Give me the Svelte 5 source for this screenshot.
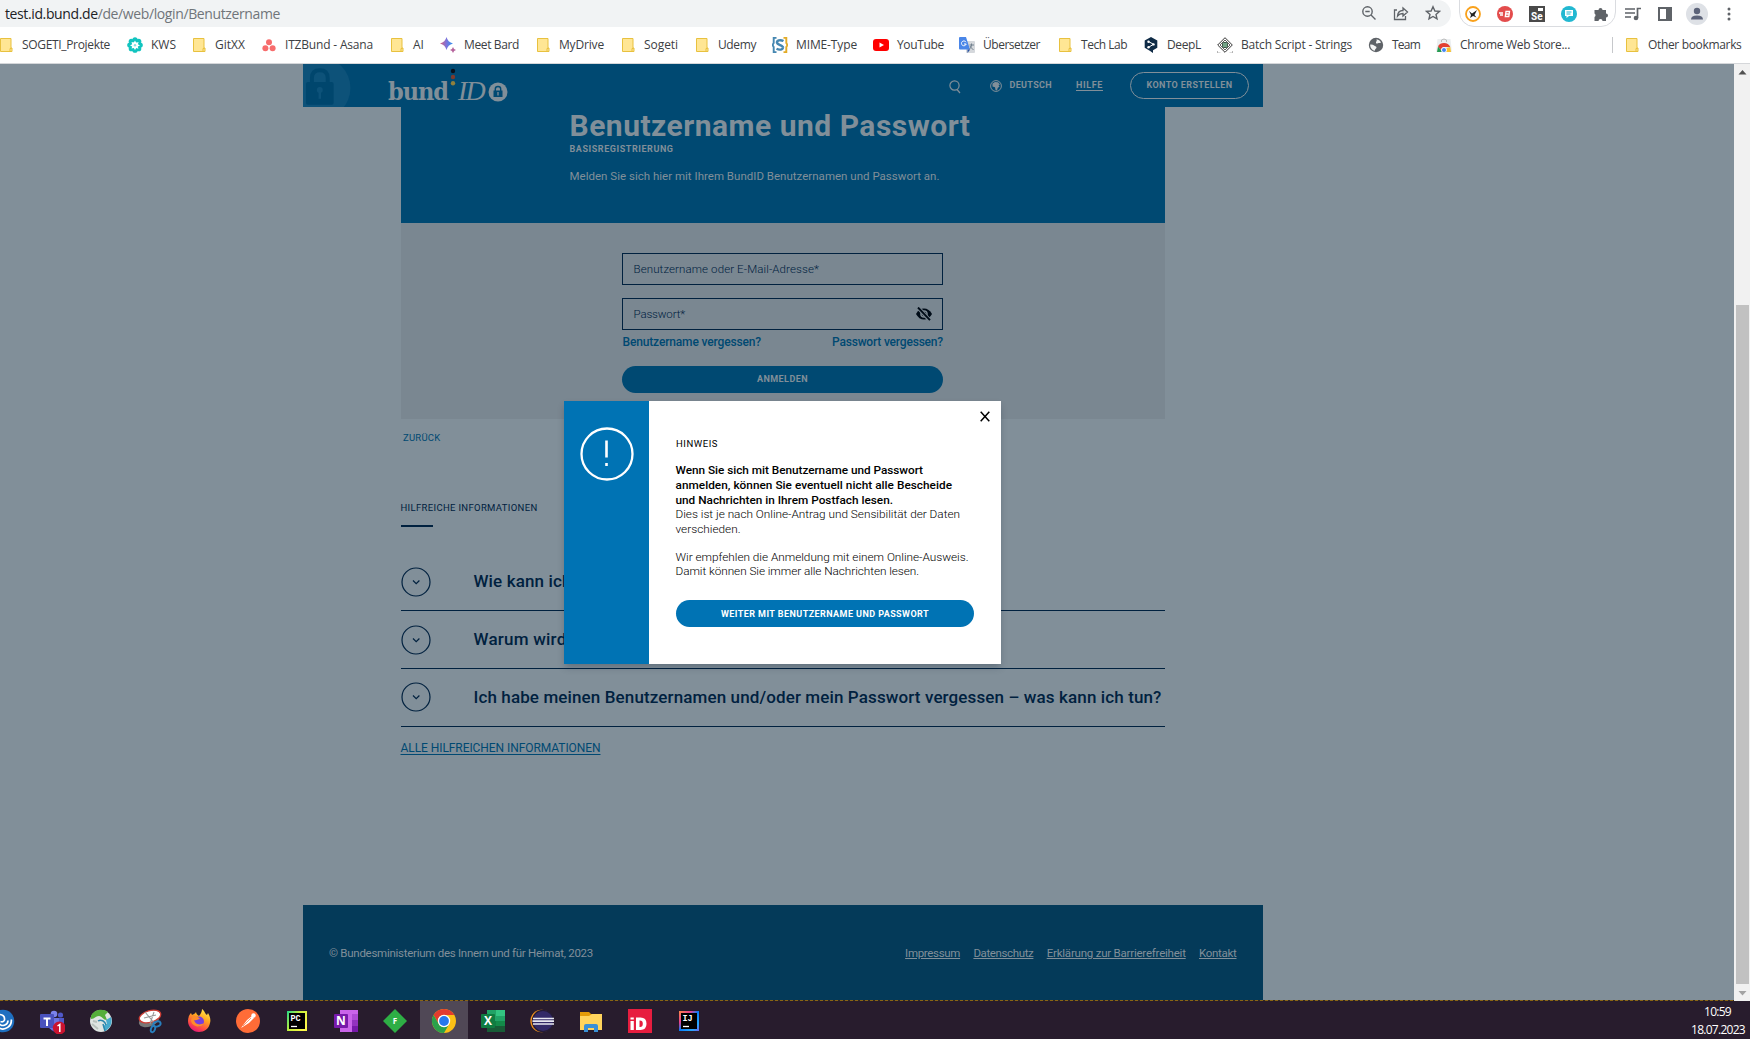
<script>
  // Spreads or tightens a line of text so that it takes up the given width.
  function fit(node, width) {
    const natural = node.getBoundingClientRect().width;
    const count = node.textContent.length;
    node.style.letterSpacing = `${(width - natural) / count}px`;
  }

  const bookmarks = [
    { label: 'SOGETI_Projekte', icon: 'folder', text: 88, cell: 129 },
    { label: 'KWS', icon: 'kws', text: 25, cell: 64 },
    { label: 'GitXX', icon: 'folder', text: 30, cell: 70 },
    { label: 'ITZBund - Asana', icon: 'asana', text: 88, cell: 128 },
    { label: 'AI', icon: 'folder', text: 11, cell: 51 },
    { label: 'Meet Bard', icon: 'bard', text: 55, cell: 95 },
    { label: 'MyDrive', icon: 'folder', text: 45, cell: 85 },
    { label: 'Sogeti', icon: 'folder', text: 34, cell: 74 },
    { label: 'Udemy', icon: 'folder', text: 38, cell: 78 },
    { label: 'MIME-Type', icon: 'mime', text: 61, cell: 101 },
    { label: 'YouTube', icon: 'youtube', text: 47, cell: 86 },
    { label: 'Übersetzer', icon: 'translate', text: 57, cell: 98 },
    { label: 'Tech Lab', icon: 'folder', text: 46, cell: 86 },
    { label: 'DeepL', icon: 'deepl', text: 34, cell: 74 },
    { label: 'Batch Script - Strings', icon: 'batch', text: 111, cell: 151 },
    { label: 'Team', icon: 'globe', text: 28, cell: 68 },
    { label: 'Chrome Web Store...', icon: 'store', text: 110, cell: 140 }
  ];

  const questions = [
    { text: 'Wie kann ich', width: 98 },
    { text: 'Warum wird', width: 93 },
    { text: 'Ich habe meinen Benutzernamen und/oder mein Passwort vergessen – was kann ich tun?', width: 688 }
  ];

  const legal = [
    { text: 'Impressum', width: 55 },
    { text: 'Datenschutz', width: 60 },
    { text: 'Erklärung zur Barrierefreiheit', width: 139 },
    { text: 'Kontakt', width: 37.5 }
  ];

  const apps = ['remote', 'teams', 'sphere', 'snip', 'firefox', 'postman', 'pycharm', 'onenote', 'forti', 'chrome', 'excel', 'eclipse', 'explorer', 'id', 'idea'];
</script>

{#snippet bookmarkIcon(name)}
  <svg class="fav" viewBox="0 0 16 16">
    {#if name === 'folder'}
      <path d="M2.5 1.500h10.500v9.500h1v3.500H2.500z" fill="#ffe694" stroke="#e8c13f" />
      <path d="M12 14.500v-3h1.500" fill="none" stroke="#e8c13f" />
    {:else if name === 'kws'}
      <g fill="#12c4bf">
        <circle cx="8" cy="2.800" r="2.600" /><circle cx="8" cy="13.200" r="2.600" />
        <circle cx="2.800" cy="8" r="2.600" /><circle cx="13.200" cy="8" r="2.600" />
        <circle cx="4.300" cy="4.300" r="2.600" /><circle cx="11.700" cy="4.300" r="2.600" />
        <circle cx="4.300" cy="11.700" r="2.600" /><circle cx="11.700" cy="11.700" r="2.600" />
      </g>
      <path d="M8 3.500l1.200 2.200 2.400-.8-.7 2.400L13 8.500l-2.200 1 .6 2.200-2.200-.6L8 13l-1.200-2-2.300.6.700-2.200-2.200-1 2.200-1.200-.7-2.300 2.300.7z" fill="#fff" />
      <circle cx="8" cy="8.300" r="1.200" fill="#12c4bf" opacity=".5" />
    {:else if name === 'asana'}
      <g fill="#f76c6c"><circle cx="8" cy="5.200" r="3" /><circle cx="4.400" cy="11.300" r="3" /><circle cx="11.600" cy="11.300" r="3" /></g>
    {:else if name === 'bard'}
      <defs><linearGradient id="bard"><stop stop-color="#d8617c" /><stop offset=".5" stop-color="#7b74dc" /><stop offset="1" stop-color="#2f93f0" /></linearGradient></defs>
      <path d="M6.500 0Q7.800 5.200 13 6.500 7.800 7.800 6.500 13 5.200 7.800 0 6.500 5.200 5.200 6.500 0z" fill="url(#bard)" />
      <path d="M13 10q.6 2.400 3 3-2.400.6-3 3-.6-2.400-3-3 2.400-.6 3-3z" fill="#b5639c" />
    {:else if name === 'mime'}
      <path d="M4.500.9H1.700V6L.5 8l1.200 2v5.100h2.800" fill="none" stroke="#4587b1" stroke-width="1.900" />
      <path d="M11.500.9h2.800V6l1.200 2-1.200 2v5.100h-2.800" fill="none" stroke="#e2ab27" stroke-width="1.900" />
      <path d="M11.500 4C8 2.200 4.600 3.500 5 5.800S11 8.200 11 10.500" fill="none" stroke="#4587b1" stroke-width="2.500" />
      <path d="M11 10.300c0 2.500-3.500 3-6.500 1.500" fill="none" stroke="#4587b1" stroke-width="2.300" />
    {:else if name === 'youtube'}
      <rect y="2" width="16" height="12" rx="3" fill="#f00" /><path d="M6.500 5.500v5L11 8z" fill="#fff" />
    {:else if name === 'translate'}
      <rect x="7" y="4" width="9" height="12" rx="1" fill="#d5d8dc" />
      <path d="M0 1q0-1 1-1h6l4 12.500H1q-1 0-1-1z" fill="#4a86e8" /><path d="M8.500 12.500h2.700L8.500 16z" fill="#2750a0" />
      <path d="M7 5.200A2.400 2.400 0 1 0 7.200 7H5" fill="none" stroke="#fff" />
      <path d="M10.500 8H15M12.500 6.500V8c0 2-1 3-2 4M11 9c1 2 2 3 3.500 3.500" fill="none" stroke="#71808e" />
    {:else if name === 'deepl'}
      <path d="M8 0l6.300 3.500v7.300L10 13.300V16l-3.300-2.300-5-2.900V3.500z" fill="#0f2b46" />
      <path d="M5.500 4.500l5 2.800-5 3" fill="none" stroke="#fff" /><g fill="#fff"><circle cx="5.500" cy="4.700" r="1.200" /><circle cx="10.500" cy="7.400" r="1.200" /><circle cx="5.500" cy="10.200" r="1.200" /></g>
    {:else if name === 'batch'}
      <path d="M8 .7L15.300 8 8 15.300.7 8z" fill="#fff" stroke="#333" /><path d="M8 3L13 8l-5 5-5-5z" fill="none" stroke="#333" stroke-width=".8" />
      <rect x="5.500" y="5.500" width="5" height="5" rx="1" fill="#75a588" stroke="#3c5547" /><path d="M.5 14v2h3M15.500 14v2h-3" fill="none" stroke="#999" stroke-width=".7" />
    {:else if name === 'globe'}
      <circle cx="8" cy="8" r="7.200" fill="#5f6368" />
      <path d="M8.500 2.200c2 .3 3.700 1.500 4.500 3.300-1.500.8-2 .2-3 .8s-2.300.4-2-1 1.200-1 .5-3.100zM2.200 7.500c1.500-.3 3 .2 4.300 1.200s2 .6 2 1.900-1.500 1-1.700 3.100C4 13.200 2 10.500 2.200 7.500z" fill="#fff" opacity=".93" />
    {:else if name === 'store'}
      <path d="M1.500 2h13L16 15H0z" fill="#eceff1" /><path d="M5.500 5V3q2.500-2 5 0v2" fill="none" stroke="#bbb" />
      <path d="M8 6a7 7 0 0 1 6.300 4H8a3 3 0 0 0-2.600 4L2 9.200A7 7 0 0 1 8 6z" fill="#e34133" />
      <path d="M2 9.500L6.500 15H1z" fill="#279c52" /><path d="M14.300 10l.7 5H8l2.500-4z" fill="#f9c22e" /><circle cx="8" cy="13" r="2.500" fill="#4285f4" stroke="#fff" />
    {/if}
  </svg>
{/snippet}

{#snippet appIcon(name)}
  <svg class="app-icon" viewBox="0 0 26 26">
    {#if name === 'remote'}
      <circle cx="13" cy="13" r="11.300" fill="#1e6fc0" />
      <g fill="none" stroke="#fff" stroke-width="1.700"><path d="M21.300 11.500A8.500 8.500 0 0 1 9 20" /><path d="M18 12.500A5 5 0 0 1 9.500 16" /><path d="M10 6.500q5 .5 4.500 5.500-1 2.500-4 1.500" /></g>
    {:else if name === 'teams'}
      <circle cx="15" cy="6" r="3.300" fill="#7b83eb" /><circle cx="21.500" cy="7" r="2.600" fill="#5059c9" />
      <path d="M10 10h15v8q-2 6-8 6-6-1-7-6z" fill="#5059c9" /><path d="M9 10h11v9q-3 6-10 1z" fill="#6a72df" />
      <rect x="1" y="6" width="14" height="14" rx="1" fill="#4a52bd" /><path d="M4.500 9.500h7v1.900H9v6.700H7v-6.700H4.500z" fill="#fff" />
      <circle cx="20.300" cy="20" r="6.500" fill="#c9132f" /><path d="M18.500 18l2.300-1.600V24" fill="none" stroke="#fff" stroke-width="1.500" />
    {:else if name === 'sphere'}
      <circle cx="13" cy="13" r="11" fill="#dfe5e2" />
      <path d="M3 8C6 1 15 0 20 4l-3 3 2 5c-4 0-5-4-8-4-4 0-4 3-8 3z" fill="#55ae3a" />
      <path d="M23 9c2 6-1 12-6 14l-2-5 4-2-1-4z" fill="#47aacd" /><path d="M10 13c3-2 7 0 8 4M15 16l2 7" fill="none" stroke="#2b86ad" stroke-width="1.500" />
      <path d="M4 16l6 5M5 13l4 1" stroke="#b9c2bd" stroke-width="2" />
    {:else if name === 'snip'}
      <ellipse cx="12" cy="12.500" rx="10.500" ry="6" transform="rotate(-20 12 12.500)" fill="#777" />
      <ellipse cx="13" cy="8.500" rx="11" ry="5.800" transform="rotate(-16 13 8.500)" fill="#fff" stroke="#cf3e35" stroke-width="1.300" />
      <path d="M8 4l10 12M17 4l-4 12M7 10l12-3" stroke="#999" stroke-width="1.100" />
      <g fill="none" stroke="#287ebd" stroke-width="1.900"><ellipse cx="20" cy="16" rx="3.700" ry="2.500" transform="rotate(-18 20 16)" /><ellipse cx="16" cy="21" rx="2" ry="3.300" transform="rotate(20 16 21)" /></g>
    {:else if name === 'firefox'}
      <defs><linearGradient id="fox" x1=".8" y1="0" x2=".3" y2="1"><stop stop-color="#fff04f" /><stop offset=".4" stop-color="#ffa51f" /><stop offset=".75" stop-color="#ff4a44" /><stop offset="1" stop-color="#e3157c" /></linearGradient></defs>
      <path d="M2 13C2 10 3 7 5 5l1 2c1-1 3-1 4-3 0 2 2 3 3 4 2-2 3-5 3-7 3 2 3 5 5 6l1-2c2 3 3 7 2 10-1 6-6 9-11 9C7 24 2 19 2 13z" fill="url(#fox)" />
      <circle cx="13" cy="13.500" r="5" fill="#7540dd" /><path d="M7 8c3-1 5 1 7 3-3 0-3 2-6 1 1 4 5 6 10 3-2 6-13 4-13-3z" fill="#ff8b2b" />
    {:else if name === 'postman'}
      <circle cx="13" cy="13" r="12" fill="#ff6c37" /><path d="M6 20l6-8 5-4 2 2-5 5z" fill="#fff" /><circle cx="18.500" cy="7.500" r="2.200" fill="#fff" /><path d="M8 18l8-8" stroke="#ff6c37" stroke-width=".7" />
    {:else if name === 'pycharm' || name === 'idea'}
      <defs>
        <linearGradient id="pc" x2="1" y2=".6"><stop stop-color="#21d789" /><stop offset=".5" stop-color="#c8f03a" /><stop offset="1" stop-color="#fcf84a" /></linearGradient>
        <linearGradient id="ij" x2="1" y2="1"><stop stop-color="#fe8a45" /><stop offset=".3" stop-color="#e9408f" /><stop offset=".5" stop-color="#087cfa" /><stop offset=".8" stop-color="#27a8ff" /><stop offset="1" stop-color="#7065ef" /></linearGradient>
      </defs>
      <rect x="3" y="3" width="20" height="20" fill={name === 'idea' ? 'url(#ij)' : 'url(#pc)'} /><rect x="5" y="5" width="16" height="16" />
      <text x="6.500" y="12.800" class="ide">{name === 'idea' ? 'IJ' : 'PC'}</text><path d="M7 18.500h6" stroke="#fff" stroke-width="1.300" />
    {:else if name === 'onenote'}
      <rect x="7" y="2" width="18" height="22" fill="#ca64ea" /><path d="M19 6h6v6h-6z" fill="#ae4bd5" /><path d="M19 12h6v6h-6z" fill="#9332bf" /><path d="M19 18h6v6h-6z" fill="#7719aa" />
      <rect x="1" y="6" width="14" height="14" rx="1" fill="#7719aa" /><text x="8" y="17" class="letter">N</text>
    {:else if name === 'forti'}
      <path d="M13 1l12 12-12 12L1 13z" fill="#2eae45" /><text x="13" y="16.200" class="small-letter">F</text>
    {:else if name === 'chrome'}
      <circle cx="13" cy="13" r="12" fill="#fbc116" /><path d="M2.600 7A12 12 0 0 1 23.400 7H13a6 6 0 0 0-5.500 8.500z" fill="#e33b2e" />
      <path d="M2.600 7A12 12 0 0 0 13 25l5.200-9A6 6 0 0 1 7.800 16z" fill="#2ba14b" /><circle cx="13" cy="13" r="6.200" fill="#fff" /><circle cx="13" cy="13" r="4.900" fill="#2878eb" />
    {:else if name === 'excel'}
      <rect x="7" y="2" width="18" height="22" fill="#21a366" /><path d="M16 2h9v6h-9z" fill="#33c481" /><path d="M7 13h9v6H7z" fill="#107c41" /><path d="M16 13h9v5h-9z" fill="#138a49" /><path d="M7 18h18v6H7z" fill="#185c37" />
      <rect x="1" y="6" width="14" height="14" rx="1" fill="#107c41" /><text x="8" y="17" class="letter">X</text>
    {:else if name === 'eclipse'}
      <circle cx="12.500" cy="13" r="11.200" fill="#f7941e" /><circle cx="14" cy="13" r="11.300" fill="#251c36" /><circle cx="14" cy="13" r="10" fill="#332a68" />
      <path d="M4 10.500h21M3.500 13.200h21.500M4 16h21" stroke="#e8e8f0" stroke-width="1.700" />
    {:else if name === 'explorer'}
      <path d="M2 4h9l2 2h11v6H2z" fill="#e39b08" /><path d="M2 8h9l3-2h10v16H2z" fill="#ffd45d" /><path d="M6 24v-6q0-2 2-2h10q2 0 2 2v6h-4v-4h-6v4z" fill="#3990d7" />
    {:else if name === 'id'}
      <rect x="1" y="1" width="24" height="24" fill="#e71d3f" /><path d="M3.500 13h3.300v9H3.500zM3.500 9.500h3.300v2H3.500z" fill="#fff" /><path d="M9 9.500h4.500q6 0 6 6.200t-6 6.300H9zM12.500 12.500v6.500q3.300.4 3.300-3.200t-3.300-3.300z" fill="#fff" fill-rule="evenodd" />
    {/if}
  </svg>
{/snippet}

<div class="screen">
  <div class="toolbar">
    <div class="address">
      <span class="url" use:fit={275}><b>test.id.bund.de</b>/de/web/login/Benutzername</span>
      <div class="address-tools">
        <svg viewBox="0 0 16 16"><circle cx="6.500" cy="6.500" r="4.700" /><path d="M10 10l4.500 4.500M4.300 6.500h4.400" /></svg>
        <svg viewBox="0 0 16 16"><path d="M4 5H1.500v9.500h11V11M4.500 11c.3-4 2.500-5.500 5.500-5.500V3l4.500 4-4.500 4V8.500c-2.500 0-4 .5-5.500 2.500z" stroke-width="1.300" /></svg>
        <svg viewBox="0 0 16 16"><path d="M8 1.800l1.900 4.200 4.500.4-3.400 3 1 4.500L8 11.500l-4 2.400 1-4.500-3.400-3 4.500-.4z" /></svg>
      </div>
    </div>
    <div class="extensions">
      <svg viewBox="0 0 16 16"><circle cx="8" cy="8" r="7" fill="#fff" stroke="#f9a11b" stroke-width="1.800" /><path d="M4 5l3 2.500L12 4l-2.500 5 2 2.500-3.500-1.500L5 12l1-3z" fill="#222" /></svg>
      <svg viewBox="0 0 16 16"><circle cx="8" cy="8" r="8" fill="#e34c4c" /><path d="M2 7h4M3 9h3M9 5.500h3.500l-.3 2.300-.4 2.700H8.300zM8.700 8h3.500" stroke="#fff" stroke-width="1.300" fill="none" /></svg>
      <svg viewBox="0 0 16 16"><rect width="16" height="16" fill="#4a4a4a" /><rect x="9" y="2" width="5" height="3" fill="#fff" /><text x="2" y="13.500" class="se">Se</text></svg>
      <svg viewBox="0 0 16 16"><circle cx="8" cy="8" r="8" fill="#22b8d1" /><path d="M4 4h8v6H8l-2.500 2v-2H4z" fill="#fff" /><path d="M5.500 6h5M5.500 8h4" stroke="#22b8d1" /></svg>
      <svg viewBox="0 0 16 16"><path d="M1.500 4h4a2 2 0 1 1 4 0H13v3.500a2 2 0 1 1 0 4V15H9.500a2 2 0 0 0-4 0h-4v-4a2 2 0 0 0 0-3.500z" fill="#5f6368" /></svg>
    </div>
    <div class="browser-tools">
      <svg viewBox="0 0 16 16"><path d="M0 3h10M0 7h10M0 11h6M12.500 12V2.500H16" fill="none" stroke="#5f6368" stroke-width="1.700" /><circle cx="11" cy="12" r="2.300" fill="#5f6368" /></svg>
      <svg viewBox="0 0 16 16"><path d="M2 2h12v12H2z" fill="none" stroke="#5f6368" stroke-width="2" /><path d="M9 1h6v14H9z" fill="#5f6368" /></svg>
      <svg class="avatar" viewBox="0 0 22 22"><circle cx="11" cy="11" r="11" fill="#dee1e6" /><circle cx="11" cy="8" r="3.200" fill="#5c6379" /><path d="M5 16.500q0-4 6-4t6 4z" fill="#5c6379" /></svg>
      <svg viewBox="0 0 16 16"><g fill="#5f6368"><circle cx="8" cy="3" r="1.500" /><circle cx="8" cy="8" r="1.500" /><circle cx="8" cy="13" r="1.500" /></g></svg>
    </div>
  </div>

  <div class="bookmarks">
    {#each bookmarks as item}
      <div class="bookmark" style:width="{item.cell}px">{@render bookmarkIcon(item.icon)}<span use:fit={item.text}>{item.label}</span></div>
    {/each}
    <div class="bookmark other">{@render bookmarkIcon('folder')}<span use:fit={93.5}>Other bookmarks</span></div>
  </div>

  <div class="viewport">
    <div class="page">
      <div class="site">
        <header>
          <svg class="watermark" viewBox="0 0 86 43"><circle cx="17" cy="24" r="31" fill="#0d5279" /><rect x="3" y="18" width="28" height="23" rx="2" fill="#00466d" /><path d="M9 18v-4q0-8 8-8t8 8v4" fill="none" stroke="#00466d" stroke-width="4" /><circle cx="17" cy="26" r="3" fill="#0d5279" /><path d="M17 27v8" stroke="#0d5279" stroke-width="2.500" /></svg>
          <div class="logo">
            <div class="logo-bund"><span use:fit={60}>bund</span></div>
            <svg class="dots" viewBox="0 0 6 43"><circle cx="3" cy="7" r="2.200" fill="#07111c" /><circle cx="3" cy="13" r="2.200" fill="#7e3a2c" /><circle cx="3" cy="19.300" r="2.200" fill="#90803d" /></svg>
            <div class="logo-id"><span use:fit={26}>ID</span></div>
            <svg class="seal" viewBox="0 0 20 43"><circle cx="10" cy="28" r="9.500" fill="#818f99" /><rect x="5.500" y="26.500" width="9" height="6.500" fill="#004972" /><path d="M7.300 27v-2q0-2.500 2.700-2.500t2.700 2.500v2" fill="none" stroke="#004972" stroke-width="1.400" /><path d="M10 28v3.500" stroke="#818f99" stroke-width="1.300" /></svg>
          </div>
          <nav>
            <svg class="search" viewBox="0 0 12 14"><circle cx="5.500" cy="5.500" r="4.600" /><path d="M8 9.500l3 3.500" /></svg>
            <svg class="world" viewBox="0 0 12 12"><circle cx="6" cy="6" r="5.400" fill="none" stroke="#818f99" /><path d="M2.500 3.500L5 2l3 .3 2 2.200-1.500.5 1 1.500-1.800 1.500-.7 2.500-1.500-.5-.5-2.700-2.500-.8z" fill="#818f99" /></svg>
            <span class="lang" use:fit={42.500}>DEUTSCH</span>
            <span class="help" use:fit={27}>HILFE</span>
            <span class="register"><span use:fit={86}>KONTO ERSTELLEN</span></span>
          </nav>
        </header>

        <main>
          <section class="hero">
            <h1><span use:fit={401}>Benutzername und Passwort</span></h1>
            <h2><span use:fit={104}>BASISREGISTRIERUNG</span></h2>
            <p><span use:fit={370}>Melden Sie sich hier mit Ihrem BundID Benutzernamen und Passwort an.</span></p>
          </section>
          <section class="form">
            <div class="field"><span use:fit={185.500}>Benutzername oder E-Mail-Adresse*</span></div>
            <div class="field">
              <span use:fit={51.500}>Passwort*</span>
              <svg class="eye" viewBox="0 0 16 14"><path d="M0 7q3-5.500 8-5.500T16 7q-3 5.500-8 5.500T0 7z" /><circle cx="8" cy="7" r="3.800" fill="#7a8791" /><circle cx="8" cy="7" r="2.300" /><path d="M1.500 0L14 13.500" stroke="#7a8791" stroke-width="4" /><path d="M2 .5l12 12.700" stroke="#000c18" stroke-width="1.900" /></svg>
            </div>
            <div class="forgot"><span use:fit={138.500}>Benutzername vergessen?</span><span use:fit={111}>Passwort vergessen?</span></div>
            <div class="submit"><span use:fit={51}>ANMELDEN</span></div>
          </section>
          <div class="back"><span use:fit={37.500}>ZURÜCK</span></div>
          <h3><span use:fit={137}>HILFREICHE INFORMATIONEN</span></h3>
          <div class="rule"></div>
          {#each questions as question}
            <div class="question">
              <svg class="toggle" viewBox="0 0 30 30"><circle cx="15" cy="15" r="14" /><path d="M12 13.500l3.200 3.200 3.200-3.200" /></svg>
              <span use:fit={question.width}>{question.text}</span>
            </div>
          {/each}
          <div class="all"><span use:fit={200}>ALLE HILFREICHEN INFORMATIONEN</span></div>
        </main>

        <footer>
          <span use:fit={264}>© Bundesministerium des Innern und für Heimat, 2023</span>
          <div class="legal">{#each legal as link}<span use:fit={link.width}>{link.text}</span>{/each}</div>
        </footer>
      </div>

      <div class="dialog">
        <div class="stripe"><svg viewBox="0 0 54 54"><circle cx="27" cy="27" r="25.500" stroke-width="2.300" /><path d="M26.500 13.500v17M26.500 36v3" stroke-width="2.600" /></svg></div>
        <div class="message">
          <svg class="close" viewBox="0 0 10 11"><path d="M.7.700l8.600 9.600M9.300.700L.7 10.300" /></svg>
          <h4><span use:fit={42}>HINWEIS</span></h4>
          <p class="strong"><span use:fit={247.500}>Wenn Sie sich mit Benutzername und Passwort</span><br /><span use:fit={276.500}>anmelden, können Sie eventuell nicht alle Bescheide</span><br /><span use:fit={217.500}>und Nachrichten in Ihrem Postfach lesen.</span></p>
          <p class="reason"><span use:fit={284.500}>Dies ist je nach Online-Antrag und Sensibilität der Daten</span><br /><span use:fit={65}>verschieden.</span></p>
          <p class="advice"><span use:fit={293}>Wir empfehlen die Anmeldung mit einem Online-Ausweis.</span><br /><span use:fit={243.500}>Damit können Sie immer alle Nachrichten lesen.</span></p>
          <div class="continue"><span use:fit={208}>WEITER MIT BENUTZERNAME UND PASSWORT</span></div>
        </div>
      </div>
    </div>
    <div class="scrollbar">
      <svg viewBox="0 0 16 16"><path d="M4.500 10.500L8.500 6l4 4.500z" fill="#505050" /></svg>
      <div class="thumb"></div>
      <svg viewBox="0 0 16 16"><path d="M4.500 6h8L8.500 10.500z" fill="#a3a3a3" /></svg>
    </div>
  </div>

  <div class="taskbar">
    <div class="apps">{#each apps as name}<div class="app" class:active={name === 'chrome'}>{@render appIcon(name)}</div>{/each}</div>
    <div class="clock"><span class="time" use:fit={27}>10:59</span><span use:fit={54}>18.07.2023</span></div>
  </div>
</div>

<style>
  :global(body) { overflow: hidden; }
  .screen { width: 1750px; height: 1039px; display: flex; flex-direction: column; overflow: hidden; background: #fff; font-family: Roboto, sans-serif; }
  .screen * { box-sizing: border-box; }
  span { white-space: nowrap; display: inline-block; }
  svg { display: block; flex: none; }
  h1, h2, h3, h4, p { margin: 0; }

  .toolbar { height: 27px; display: flex; flex: none; font-family: 'Open Sans', 'Noto Sans', sans-serif; }
  .address { width: 1451px; background: #f1f3f4; border-radius: 0 14px 14px 0; display: flex; justify-content: space-between; padding: 0 10px 0 5px; color: #70757a; }
  .url { font-size: 14px; line-height: 27px; }
  .url b { font-weight: 400; color: #202124; }
  .address-tools { display: flex; gap: 16px; padding-top: 5px; }
  .address-tools svg { width: 16px; height: 16px; fill: none; stroke: #5f6368; stroke-width: 1.400; }
  .extensions { display: flex; align-items: center; gap: 16px; width: 157px; margin: -2px 0 0 8px; padding: 0 5px; border: 1px solid #dadce0; border-radius: 0 0 15px 15px; height: 29px; }
  .extensions svg, .browser-tools svg { width: 16px; height: 16px; }
  .extensions svg { margin-top: 2px; }
  .se { font: bold 10px Roboto, sans-serif; fill: #fff; }
  .browser-tools { display: flex; align-items: center; gap: 16px; margin-left: 9px; }
  .browser-tools .avatar { width: 22px; height: 22px; margin: 0 -3px; }

  .bookmarks { height: 37px; flex: none; display: flex; align-items: center; border-bottom: 1px solid #d5d7da; margin-left: -2px; font: 12px/17px 'Open Sans', 'Noto Sans', sans-serif; color: #3c4043; }
  .bookmark { display: flex; align-items: center; gap: 8px; flex: none; }
  .bookmark span { margin-top: -1px; }
  .fav { width: 16px; height: 16px; }
  .other { margin-left: 36px; border-left: 1px solid #c6c8cb; padding-left: 11px; }

  .viewport { height: 937px; flex: none; display: flex; }
  .page { width: 1734px; position: relative; background: #818f99; }
  .page::after { content: ''; position: absolute; left: 0; right: 0; bottom: 0; height: 1px; background: repeating-linear-gradient(90deg, #8a6514 0 3px, #332820 3px 5px); }
  .site { width: 960px; height: 936px; margin-left: 303px; display: flex; flex-direction: column; color: #00213f; }
  header { height: 43px; flex: none; background: #004972; display: flex; color: #818f99; }
  .watermark { width: 85px; height: 43px; }
  .logo { display: flex; height: 43px; color: #818f99; }
  .logo-bund { width: 60px; font: bold 25px/30px 'DejaVu Serif Condensed', 'DejaVu Serif', serif; font-stretch: condensed; padding-top: 13px; }
  .dots { width: 6px; height: 43px; margin-left: 2px; }
  .logo-id { width: 27px; font: italic 28px/30px 'Liberation Serif', serif; padding-top: 12px; margin-left: 2px; }
  .seal { width: 20px; height: 43px; margin-left: 3px; }
  nav { margin-left: auto; padding: 8px 14px 0 0; display: flex; font-size: 9px; font-weight: 700; line-height: 12px; }
  .search { width: 12px; height: 14px; margin: 8px 29px 0 0; fill: none; stroke: #818f99; stroke-width: 1.200; }
  .world { width: 12px; height: 12px; margin: 8px 8px 0 0; }
  .lang { margin: 7px 24px 0 0; }
  .help { margin: 7px 27px 0 0; height: 12px; border-bottom: 1px solid #818f99; }
  .register { width: 119px; height: 27px; border: 1px solid #818f99; border-radius: 14px; text-align: center; padding-top: 6px; }

  main { width: 764px; margin-left: 98px; }
  .hero { height: 116px; padding: 2px 0 0 168.500px; background: #004972; color: #818f99; }
  h1 { font-size: 30px; line-height: 34px; font-weight: 700; height: 34px; }
  h2 { font-size: 9px; line-height: 12px; height: 12px; font-weight: 700; }
  .hero p { font-size: 11.500px; line-height: 16px; font-weight: 400; margin-top: 13px; }
  .form { height: 196px; background: #7a8791; padding: 30px 222px 0 221px; }
  .field { height: 32px; border: 1px solid #00213f; margin-bottom: 13px; padding: 0 10px 0 10.500px; display: flex; align-items: center; justify-content: space-between; font-size: 11.500px; font-weight: 300; }
  .field + .field { margin-bottom: 4px; }
  .eye { width: 16px; height: 14px; fill: #000c18; }
  .forgot { display: flex; justify-content: space-between; padding-left: .5px; font-size: 12px; line-height: 16px; font-weight: 500; color: #004972; }
  .submit { margin-top: 16px; height: 27px; border-radius: 14px; background: #004972; color: #818f99; font-size: 9px; font-weight: 700; line-height: 27px; text-align: center; }
  .back { margin: 13px 0 0 2px; font-size: 9.500px; line-height: 12px; height: 12px; color: #004972; }
  h3 { margin-top: 58px; font-size: 9.500px; line-height: 12px; height: 12px; font-weight: 400; }
  h3 span, .all span { margin-left: -.5px; }
  .rule { width: 32px; height: 2px; margin: 11px 0 26px; background: #00213f; }
  .question { height: 58px; border-bottom: 1px solid #00213f; display: flex; align-items: center; gap: 42.500px; font-size: 17px; line-height: 20px; font-weight: 500; }
  .question:nth-last-child(2) .toggle { margin-top: -1px; }
  .question span { margin-top: -1px; }
  .toggle { width: 30px; height: 30px; fill: none; stroke: #00213f; stroke-width: 1.200; }
  .all { margin-top: 13px; font-size: 12px; line-height: 16px; color: #004972; }
  .all span { text-decoration: underline; text-underline-offset: 2px; }
  footer { margin-top: auto; height: 95px; background: #043a59; color: #818f99; display: flex; justify-content: space-between; padding: 40px 26.500px 0 26px; font-size: 11.500px; line-height: 16px; }
  .legal { display: flex; gap: 13.300px; }
  .legal span { text-decoration: underline; text-underline-offset: 1px; }

  .dialog { position: absolute; left: 564px; top: 337px; width: 437px; height: 263px; display: flex; background: #fff; color: #000; box-shadow: 0 4px 7px -1px rgba(0, 20, 40, .25); }
  .stripe { width: 85px; background: #0073b4; padding: 26px 0 0 15.500px; }
  .stripe svg { width: 54px; height: 54px; fill: none; stroke: #fff; }
  .message { width: 352px; padding: 37px 27px 0; position: relative; font-size: 11.800px; }
  .close { position: absolute; width: 10px; height: 11px; right: 11px; top: 10px; stroke: #000; stroke-width: 1.500; }
  h4 { font-size: 9.500px; line-height: 12px; height: 12px; font-weight: 400; }
  p { font-weight: 300; line-height: 14.500px; }
  .message p span { vertical-align: top; margin-left: -.5px; }
  .message .strong { margin-top: 12.500px; font-weight: 500; line-height: 15px; }
  .message .reason { margin-top: -.8px; line-height: 14.900px; }
  .message .advice { margin-top: 13px; }
  .continue { margin-top: 21px; height: 27px; border-radius: 14px; background: #0073b4; color: #fff; font-size: 9px; font-weight: 700; line-height: 28px; text-align: center; }

  .scrollbar { width: 16px; background: #f1f1f1; display: flex; flex-direction: column; justify-content: space-between; }
  .scrollbar svg { width: 16px; height: 16px; }
  .thumb { width: 13px; height: 679px; margin: auto 1px 1px 2px; background: #c1c1c1; }

  .taskbar { height: 38px; flex: none; background: #281c2d; display: flex; justify-content: space-between; }
  .apps { display: flex; margin-left: -21px; gap: 1px; }
  .app { width: 48px; height: 38px; display: grid; place-items: center; padding-top: 1px; }
  .active { background: #504856; }
  .app-icon { width: 26px; height: 26px; }
  .letter { font: bold 12px 'Open Sans', sans-serif; fill: #fff; text-anchor: middle; }
  .small-letter { font: bold 8px 'Open Sans', sans-serif; fill: #fff; text-anchor: middle; }
  .ide { font: bold 8.500px 'Liberation Mono', monospace; fill: #fff; }
  .clock { display: flex; flex-direction: column; align-items: flex-end; padding: 2px 5px 0 0; color: #fff; font: 12px/18px 'Open Sans', sans-serif; }
  .time { margin-right: 14px; }
</style>
